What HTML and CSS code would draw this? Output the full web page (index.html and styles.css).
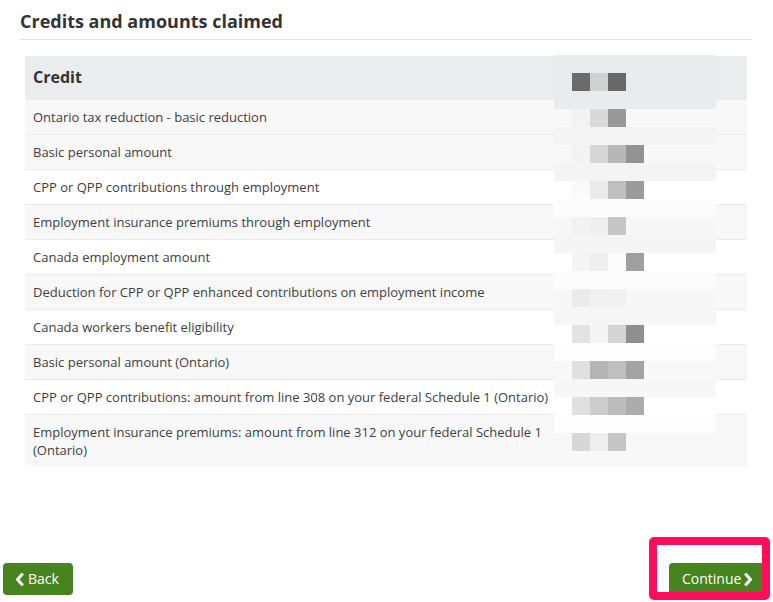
FILE: index.html
```html
<!DOCTYPE html>
<html lang="en">
<head>
<meta charset="utf-8">
<title>Credits and amounts claimed</title>
<link rel="stylesheet" href="styles.css">
</head>
<body>
<div class="page">
  <h2 class="title">Credits and amounts claimed</h2>
  <div class="table-wrap">
    <div class="table">
      <div class="row head"><div class="c1">Credit</div><div class="c2"></div></div>
      <div class="row gray"><div class="c1">Ontario tax reduction - basic reduction</div><div class="c2"></div></div>
      <div class="row gray"><div class="c1">Basic personal amount</div><div class="c2"></div></div>
      <div class="row"><div class="c1">CPP or QPP contributions through employment</div><div class="c2"></div></div>
      <div class="row gray"><div class="c1">Employment insurance premiums through employment</div><div class="c2"></div></div>
      <div class="row"><div class="c1">Canada employment amount</div><div class="c2"></div></div>
      <div class="row gray"><div class="c1">Deduction for CPP or QPP enhanced contributions on employment income</div><div class="c2"></div></div>
      <div class="row"><div class="c1">Canada workers benefit eligibility</div><div class="c2"></div></div>
      <div class="row gray"><div class="c1">Basic personal amount (Ontario)</div><div class="c2"></div></div>
      <div class="row"><div class="c1">CPP or QPP contributions: amount from line 308 on your federal Schedule 1 (Ontario)</div><div class="c2"></div></div>
      <div class="row gray"><div class="c1">Employment insurance premiums: amount from line 312 on your federal Schedule 1 (Ontario)</div><div class="c2"></div></div>
    </div>
    <div class="mosaic" aria-hidden="true">
      <div class="m hd"></div>
      <div class="m hd"><i></i><i style="background:#6b6b6b"></i><i style="background:#d0d2d1"></i><i style="background:#686868"></i></div>
      <div class="m hd"></div>
      <div class="m" style="background:#f8f8f8"><i></i><i style="background:#f3f3f3"></i><i style="background:#d9d9d9"></i><i style="background:#989898"></i></div>
      <div class="m" style="background:#f4f4f4"></div>
      <div class="m" style="background:#f8f8f8"><i></i><i style="background:#f3f3f3"></i><i style="background:#d6d6d6"></i><i style="background:#b7b7b7"></i><i style="background:#939393"></i></div>
      <div class="m" style="background:#f4f4f4"></div>
      <div class="m" style="background:#ffffff"><i></i><i style="background:#fafafa"></i><i style="background:#ebebeb"></i><i style="background:#bfbfbf"></i><i style="background:#9b9b9b"></i></div>
      <div class="m" style="background:#fcfcfc"></div>
      <div class="m" style="background:#f7f7f7"><i></i><i style="background:#f2f2f2"></i><i style="background:#efefef"></i><i style="background:#c6c6c6"></i></div>
      <div class="m" style="background:#f5f5f5"></div>
      <div class="m" style="background:#ffffff"><i></i><i style="background:#f4f4f4"></i><i style="background:#eeeeee"></i><i style="background:#fcfcfc"></i><i style="background:#a0a0a0"></i></div>
      <div class="m" style="background:#fcfcfc"></div>
      <div class="m" style="background:#f7f7f7"><i></i><i style="background:#ebebeb"></i><i style="background:#f0f0f0"></i><i style="background:#f1f1f1"></i></div>
      <div class="m" style="background:#f6f6f6"></div>
      <div class="m" style="background:#ffffff"><i></i><i style="background:#e3e3e3"></i><i style="background:#f5f5f5"></i><i style="background:#d4d4d4"></i><i style="background:#8f8f8f"></i></div>
      <div class="m" style="background:#fdfdfd"></div>
      <div class="m" style="background:#f8f8f8"><i></i><i style="background:#e0e0e0"></i><i style="background:#b4b4b4"></i><i style="background:#c0c0c0"></i><i style="background:#a3a3a3"></i></div>
      <div class="m" style="background:#f7f7f7"></div>
      <div class="m" style="background:#ffffff"><i></i><i style="background:#e0e0e0"></i><i style="background:#cccccc"></i><i style="background:#bcbcbc"></i><i style="background:#acacac"></i></div>
      <div class="m" style="background:#fdfdfd"></div>
      <div class="m"><i></i><i style="background:#d7d7d7"></i><i style="background:#efefef"></i><i style="background:#c5c5c5"></i></div>
    </div>
  </div>
  <div class="footer">
    <button class="btn back" type="button">
      <svg class="chev" width="9" height="13" viewBox="0 0 9 13"><polyline points="7,1.5 2.5,6.5 7,11.5" fill="none" stroke="#fff" stroke-width="3" stroke-linecap="round" stroke-linejoin="round"/></svg>
      <span>Back</span>
    </button>
    <button class="btn next" type="button">
      <span>Continue</span>
      <svg class="chev" width="9" height="13" viewBox="0 0 9 13"><polyline points="2,1.5 6.5,6.5 2,11.5" fill="none" stroke="#fff" stroke-width="3" stroke-linecap="round" stroke-linejoin="round"/></svg>
    </button>
  </div>
  <div class="highlight" aria-hidden="true"></div>
</div>
</body>
</html>
```

FILE: styles.css
```css
html, body {
  margin: 0;
  padding: 0;
  background: #ffffff;
}
body {
  font-family: "Open Sans", "Liberation Sans", sans-serif;
  color: #404040;
}
.page {
  position: relative;
  width: 773px;
  height: 602px;
  overflow: hidden;
}
.title {
  margin: 0 21px 0 20px;
  padding: 9px 0 6px;
  font-size: 18px;
  line-height: 24px;
  font-weight: 700;
  color: #333333;
  border-bottom: 1px solid #e3e3e3;
}
.table-wrap {
  position: relative;
  margin: 16px 26px 0 25px;
}
.table {
  display: flex;
  flex-direction: column;
}
.row {
  display: grid;
  grid-template-columns: 539px 1fr;
  background: #ffffff;
  border-top: 1px solid #ececec;
  font-size: 13px;
  line-height: 18px;
}
.row.gray {
  background: #f8f8f8;
}
.row.head {
  background: #ebeced;
  border-top: none;
  font-size: 16px;
  font-weight: 700;
  line-height: 23px;
  color: #333333;
}
.row .c1 {
  padding: 8px 8px;
}
.row.head .c1 {
  padding: 10px 8px;
}
.mosaic {
  position: absolute;
  left: 529px;
  top: -1px;
  width: 162px;
  display: flex;
  flex-direction: column;
}
.m {
  display: flex;
  height: 18px;
}
.m.hd {
  background: #eaebed;
}
.m i {
  display: block;
  width: 18px;
  height: 18px;
}
.footer {
  display: flex;
  justify-content: space-between;
  align-items: flex-start;
  margin-top: 96px;
  padding: 0 8px 0 3px;
}
.btn {
  display: flex;
  align-items: center;
  height: 32px;
  border: none;
  border-radius: 4px;
  background: #47831f;
  color: #ffffff;
  font-family: "Open Sans", "Liberation Sans", sans-serif;
  font-size: 14px;
  line-height: 20px;
  margin: 0;
  cursor: pointer;
}
.btn.back {
  width: 70px;
  padding: 0 0 0 12px;
  gap: 4px;
}
.btn.next {
  width: 96px;
  padding: 0 0 0 13px;
  gap: 3px;
}
.chev {
  display: block;
}
.highlight {
  position: absolute;
  left: 649px;
  top: 537px;
  width: 105px;
  height: 47px;
  border: 8px solid #fd0e5a;
  border-radius: 5px;
}
```
